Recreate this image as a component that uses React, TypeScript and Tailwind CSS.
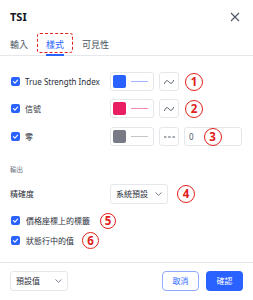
import { useState } from 'react';

const BLUE = '#2962ff';

function Check() {
  return (
    <span className="w-[9px] h-[9px] rounded-[2px] bg-[#2962ff] flex items-center justify-center shrink-0">
      <svg width="7" height="7" viewBox="0 0 10 10" fill="none">
        <path d="M2 5.2 4.2 7.2 8 3" stroke="white" strokeWidth="1.6" strokeLinecap="round" strokeLinejoin="round" />
      </svg>
    </span>
  );
}

function Mark({ n, size = 18 }: { n: number; size?: number }) {
  return (
    <span
      className="rounded-full border-[1.5px] border-[#e0201b] text-[#e0201b] font-bold flex items-center justify-center shrink-0 leading-none text-[11.5px] bg-white"
      style={{ width: size, height: size }}
    >
      {n}
    </span>
  );
}

function ColorBtn({ swatch, line }: { swatch: string; line: string }) {
  return (
    <div className="w-[44px] h-[19px] border border-gray-200 rounded-[3px] flex items-center pl-[2px] gap-[5px] shrink-0">
      <span className="w-[13px] h-[13px] rounded-[2px]" style={{ background: swatch }} />
      <span className="w-[17px] h-[1.5px]" style={{ background: line }} />
    </div>
  );
}

function StyleBtn({ dashed }: { dashed?: boolean }) {
  return (
    <div className="w-[20px] h-[19px] border border-gray-200 rounded-[3px] flex items-center justify-center shrink-0">
      {dashed ? (
        <svg width="11" height="4" viewBox="0 0 11 4">
          <path d="M0 2h2.5M4.2 2h2.5M8.4 2h2.5" stroke="#4b5563" strokeWidth="1" />
        </svg>
      ) : (
        <svg width="10" height="6" viewBox="0 0 10 6" fill="none">
          <path d="M0.5 4.5C2 1 3.5 1 5 3s3 2 4.5-1.5" stroke="#4b5563" strokeWidth="1" strokeLinecap="round" />
        </svg>
      )}
    </div>
  );
}

function Chevron() {
  return (
    <svg width="7" height="4" viewBox="0 0 7 4" fill="none">
      <path d="M0.5 0.5 3.5 3.3 6.5 0.5" stroke="#6b7280" strokeWidth="0.9" />
    </svg>
  );
}

export default function App() {
  const [tab] = useState('style');
  return (
    <div
      className="w-[253px] h-[300px] bg-white text-[#131722] overflow-hidden flex flex-col"
      style={{ fontFamily: '"Noto Sans", "Noto Sans CJK TC", sans-serif' }}
    >
      {/* Header */}
      <div className="h-[34px] flex items-center justify-between pl-[10px] pr-[13px]">
        <span className="text-[11px] font-bold">TSI</span>
        <svg width="10" height="10" viewBox="0 0 10 10">
          <path d="M1 1l8 8M9 1l-8 8" stroke="#4b5563" strokeWidth="1.1" />
        </svg>
      </div>

      {/* Tabs */}
      <div className="h-[22px] border-b border-gray-200 flex items-stretch pl-[10px] gap-[18px] text-[9px] text-[#4b5563]">
        <span className="flex items-center">輸入</span>
        <span className="relative flex items-center text-[#2962ff]">
          {tab === 'style' && <span className="absolute left-0 right-0 bottom-[-1px] h-[2px] bg-[#2962ff]" />}
          <span className="absolute left-[-9px] right-[-9px] top-[-1px] bottom-[2px] border-[1.5px] border-dashed border-[#e0201b] rounded-[3px]" />
          樣式
        </span>
        <span className="flex items-center">可見性</span>
      </div>

      {/* Lines */}
      <div className="flex flex-col gap-[8px] mt-[16px] pl-[11px] text-[8px] text-[#2a2e39]">
        <div className="flex items-center h-[19px]">
          <div className="w-[99px] flex items-center gap-[5px]">
            <Check />
            <span>True Strength Index</span>
          </div>
          <ColorBtn swatch={BLUE} line="#9fb6fc" />
          <div className="ml-[5px]"><StyleBtn /></div>
          <div className="ml-[6px]"><Mark n={1} /></div>
        </div>
        <div className="flex items-center h-[19px]">
          <div className="w-[99px] flex items-center gap-[5px]">
            <Check />
            <span>信號</span>
          </div>
          <ColorBtn swatch="#e91e63" line="#f48aad" />
          <div className="ml-[5px]"><StyleBtn /></div>
          <div className="ml-[6px]"><Mark n={2} /></div>
        </div>
        <div className="flex items-center h-[19px] mt-[1px]">
          <div className="w-[99px] flex items-center gap-[5px]">
            <Check />
            <span>零</span>
          </div>
          <ColorBtn swatch="#787b86" line="#c3c5ca" />
          <div className="ml-[5px]"><StyleBtn dashed /></div>
          <div className="ml-[5px] w-[58px] h-[19px] border border-gray-200 rounded-[3px] flex items-center pl-[4px] gap-[10px]">
            <span className="text-[#4b5563]">0</span>
            <Mark n={3} />
          </div>
        </div>
      </div>

      {/* Output */}
      <div className="mt-[19px] pl-[10px] text-[6.5px] text-[#6b7280]">輸出</div>
      <div className="mt-[9px] pl-[10px] flex items-center h-[20px] text-[8px] text-[#2a2e39]">
        <span className="w-[100px]">精確度</span>
        <div className="w-[58px] h-[20px] border border-gray-200 rounded-[3px] flex items-center justify-between pl-[5px] pr-[5px]">
          <span>系統預設</span>
          <Chevron />
        </div>
        <div className="ml-[9px]"><Mark n={4} /></div>
      </div>
      <div className="mt-[9px] pl-[11px] flex items-center h-[16px] gap-[6px] text-[8px] text-[#2a2e39]">
        <Check />
        <span>價格座標上的標籤</span>
        <div className="ml-[4px]"><Mark n={5} size={16} /></div>
      </div>
      <div className="mt-[4px] pl-[11px] flex items-center h-[16px] gap-[6px] text-[8px] text-[#2a2e39]">
        <Check />
        <span>狀態行中的值</span>
        <div className="ml-[2px]"><Mark n={6} size={17} /></div>
      </div>

      {/* Footer */}
      <div className="mt-[13px] border-t border-gray-200 flex items-center justify-between px-[10px] pt-[8px] text-[8px]">
        <div className="w-[58px] h-[20px] border border-gray-200 rounded-[3px] flex items-center justify-between pl-[5px] pr-[5px] text-[#2a2e39]">
          <span>預設值</span>
          <Chevron />
        </div>
        <div className="flex items-center gap-[7px]">
          <button className="w-[37px] h-[20px] rounded-[4px] border border-[#8fa9ff] text-[#2962ff] flex items-center justify-center">取消</button>
          <button className="w-[37px] h-[20px] rounded-[4px] bg-[#2962ff] text-white flex items-center justify-center">確認</button>
        </div>
      </div>
    </div>
  );
}
